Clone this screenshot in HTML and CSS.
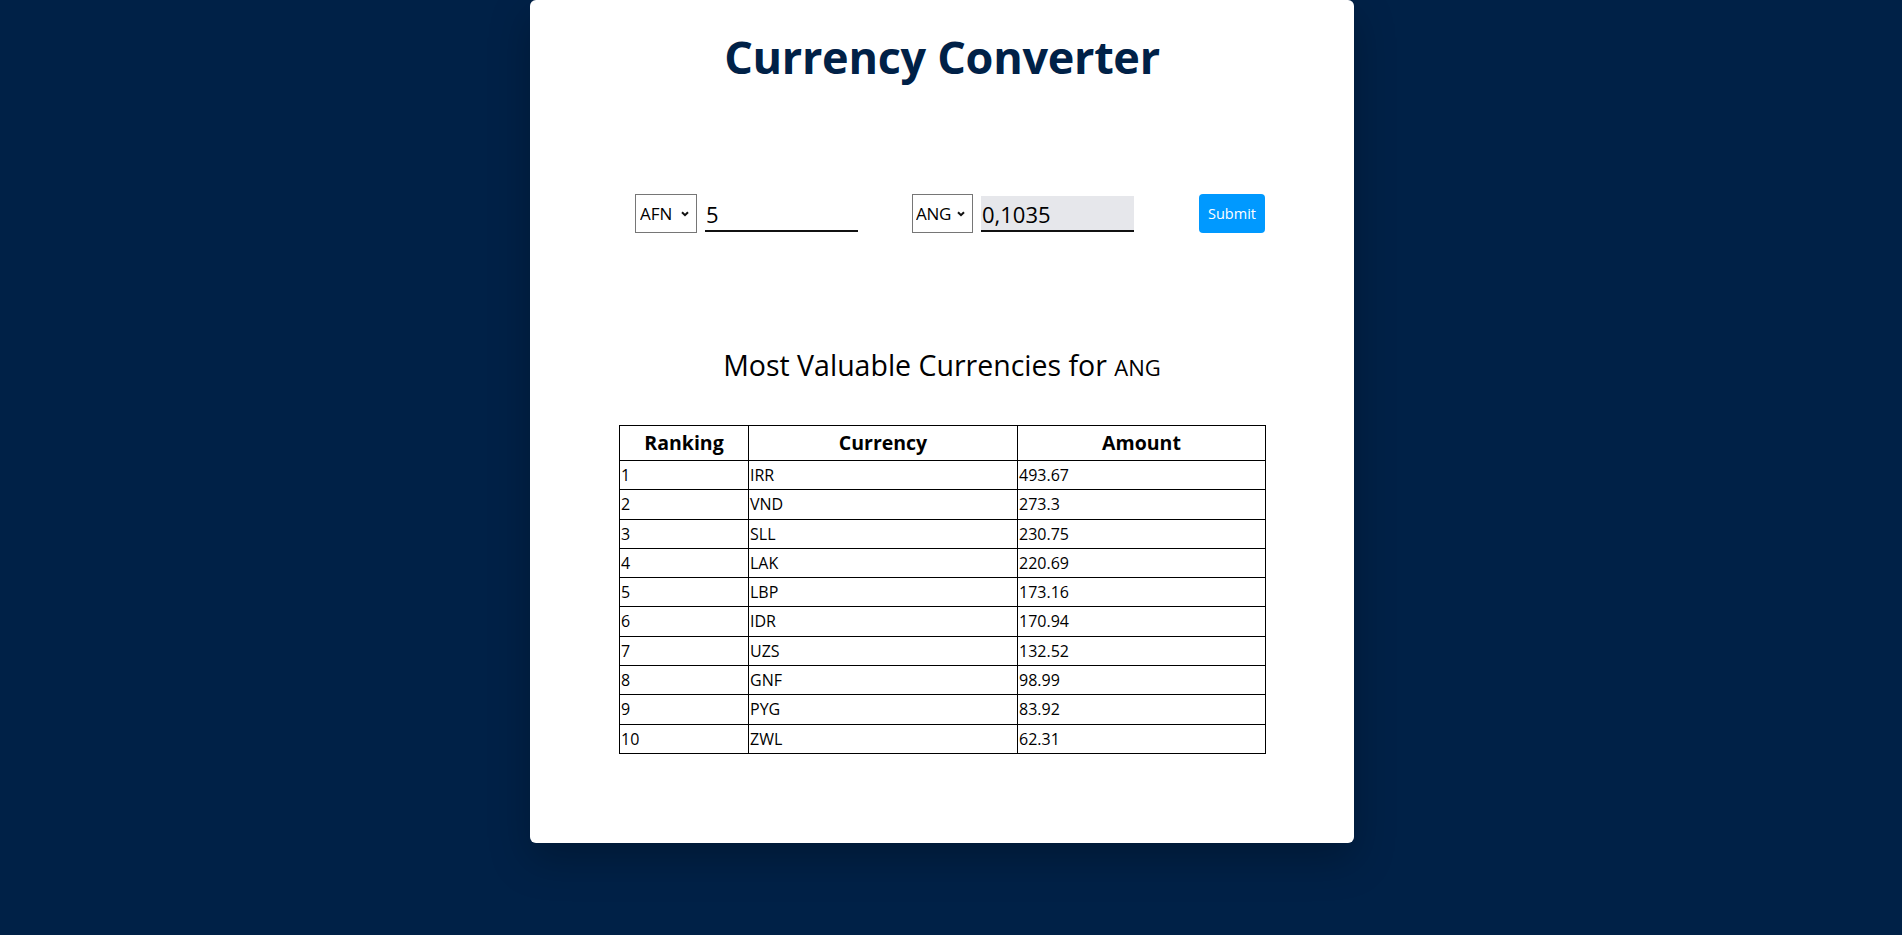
FILE: index.html
```html
<!DOCTYPE html>
<html lang="en">
<head>
<meta charset="utf-8">
<title>Currency Converter</title>
<link rel="stylesheet" href="styles.css">
</head>
<body>
<div class="page">
  <main class="card">
    <h1 class="title">Currency Converter</h1>
    <div class="content">
      <form class="converter">
        <div class="field">
          <span class="select-wrap">
            <select class="currency-select"><option>AFN</option></select>
            <svg class="chev" width="8" height="6" viewBox="0 0 8 6"><path d="M1 1.2 L4 4.2 L7 1.2" fill="none" stroke="#111" stroke-width="2"/></svg>
          </span>
          <input class="amount" type="text" value="5">
        </div>
        <div class="field">
          <span class="select-wrap">
            <select class="currency-select narrow"><option>ANG</option></select>
            <svg class="chev" width="8" height="6" viewBox="0 0 8 6"><path d="M1 1.2 L4 4.2 L7 1.2" fill="none" stroke="#111" stroke-width="2"/></svg>
          </span>
          <input class="amount result" type="text" value="0,1035" readonly>
        </div>
        <button class="submit" type="button">Submit</button>
      </form>

      <h2 class="subtitle">Most Valuable Currencies for <span class="code">ANG</span></h2>

      <table class="ranking">
        <colgroup>
          <col class="c1"><col class="c2"><col class="c3">
        </colgroup>
        <thead>
          <tr><th>Ranking</th><th>Currency</th><th>Amount</th></tr>
        </thead>
        <tbody>
          <tr><td>1</td><td>IRR</td><td>493.67</td></tr>
          <tr><td>2</td><td>VND</td><td>273.3</td></tr>
          <tr><td>3</td><td>SLL</td><td>230.75</td></tr>
          <tr><td>4</td><td>LAK</td><td>220.69</td></tr>
          <tr><td>5</td><td>LBP</td><td>173.16</td></tr>
          <tr><td>6</td><td>IDR</td><td>170.94</td></tr>
          <tr><td>7</td><td>UZS</td><td>132.52</td></tr>
          <tr><td>8</td><td>GNF</td><td>98.99</td></tr>
          <tr><td>9</td><td>PYG</td><td>83.92</td></tr>
          <tr><td>10</td><td>ZWL</td><td>62.31</td></tr>
        </tbody>
      </table>
    </div>
  </main>
</div>
</body>
</html>
```

FILE: styles.css
```css
* { box-sizing: border-box; }

html, body {
  margin: 0;
  padding: 0;
  background: #002147;
  font-family: "Open Sans", "Noto Sans", sans-serif;
  color: #000;
}

.page {
  display: flex;
  justify-content: center;
  padding-right: 18px;
  min-height: 935px;
}

.card {
  width: 824px;
  height: 843px;
  background: #fff;
  border-radius: 6px;
  box-shadow: 0 16px 40px rgba(0, 0, 0, 0.25);
  padding-top: 27px;
  display: flex;
  flex-direction: column;
  align-items: center;
}

.title {
  margin: 0;
  font-size: 45px;
  line-height: 60px;
  font-weight: 700;
  color: #002147;
  letter-spacing: -0.3px;
}

.content {
  width: 646px;
  display: flex;
  flex-direction: column;
}

.converter {
  margin-top: 107px;
  height: 39px;
  padding-left: 16px;
  display: flex;
  align-items: center;
}

.field {
  display: flex;
  align-items: center;
  gap: 8px;
}

.field + .field {
  margin-left: 54px;
}

.select-wrap {
  position: relative;
  display: block;
}

.currency-select {
  -webkit-appearance: none;
  appearance: none;
  display: block;
  width: 62px;
  height: 39px;
  border: 1px solid #767676;
  border-radius: 0;
  background: #fff;
  font-family: inherit;
  font-size: 17px;
  color: #000;
  padding: 0 0 0 4px;
  margin: 0;
}

.currency-select.narrow {
  width: 61px;
  padding-left: 3px;
  letter-spacing: -0.3px;
}

.chev {
  position: absolute;
  right: 8px;
  top: 17px;
  pointer-events: none;
}

.amount {
  display: block;
  width: 153px;
  height: 36px;
  border: none;
  border-bottom: 2px solid #111;
  background: transparent;
  font-family: inherit;
  font-size: 22px;
  color: #000;
  padding: 2px 1px 0;
  margin: 0;
  outline: none;
}

.amount.result {
  background: #e6e7eb;
}

.submit {
  margin-left: auto;
  width: 66px;
  height: 39px;
  border: none;
  border-radius: 4px;
  background: #0099ff;
  color: #fff;
  font-family: inherit;
  font-size: 14.5px;
  padding: 0;
}

.subtitle {
  margin: 112px 0 0;
  text-align: center;
  font-weight: 400;
  font-size: 28.5px;
  line-height: 40px;
}

.subtitle .code {
  font-size: 22px;
}

.ranking {
  margin-top: 38px;
  width: 646px;
  border-collapse: collapse;
  table-layout: fixed;
  font-size: 16px;
}

.ranking .c1 { width: 129px; }
.ranking .c2 { width: 269px; }
.ranking .c3 { width: 248px; }

.ranking th,
.ranking td {
  border: 1px solid #000;
  padding: 0 1px;
  text-align: left;
}

.ranking th {
  text-align: center;
  font-size: 19.5px;
  font-weight: 700;
  line-height: 34px;
}

.ranking td {
  line-height: 28.3px;
}
```
